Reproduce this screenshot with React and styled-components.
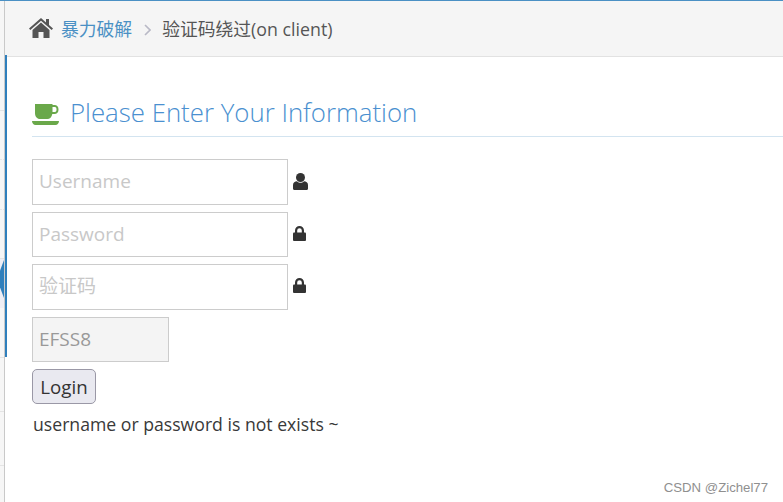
import React from "react";
import styled, { createGlobalStyle } from "styled-components";

const Global = createGlobalStyle`
  html, body { margin: 0; padding: 0; background: #fff; }
  body { width: 783px; height: 502px; overflow: hidden; font-family: "Open Sans", "Noto Sans CJK SC", sans-serif; }
  * { box-sizing: border-box; }
`;

const Page = styled.div`
  width: 783px;
  height: 502px;
  display: flex;
  position: relative;
  overflow: hidden;
  background: #fff;
  border-top: 1px solid #4a90c4;
`;

const Rail = styled.aside`
  width: 5px;
  flex: none;
  background: #f6f6f6;
  border-right: 1px solid #c9c9c9;
  display: flex;
  flex-direction: column;
`;

const RailItem = styled.div`
  height: ${p => p.$h}px;
  flex: none;
  border-bottom: 1px ${p => (p.$faint ? "dotted #e6e6e6" : "solid #e4e4e4")};
`;

const RailActive = styled.div`
  height: 49px;
  flex: none;
  background: #eeeef5;
  display: flex;
  align-items: center;
  &::after {
    content: "";
    width: 4px;
    height: 38px;
    margin-top: -9px;
    background: #2f7fbc;
    clip-path: polygon(100% 0, 100% 100%, 0 72%, 0 28%);
  }
`;

const Main = styled.main`
  flex: 1;
  display: flex;
  flex-direction: column;
  min-width: 0;
  position: relative;
`;

const Breadcrumbs = styled.nav`
  height: 56px;
  flex: none;
  background: #f5f5f5;
  border-bottom: 1px solid #e2e2e2;
  display: flex;
  align-items: center;
  padding: 0 0 2px 24px;
  font-size: 17.8px;
  color: #555;
`;

const HomeIcon = styled.svg`
  width: 24px;
  height: 20px;
  color: #555;
  margin: 1px 8px 0 0;
`;

const CrumbLink = styled.span`
  color: #4a90c4;
`;

const Chevron = styled.svg`
  width: 7px;
  height: 12px;
  margin: 4px 11px 0 12px;
`;

const ActiveBar = styled.div`
  position: absolute;
  left: 0;
  top: 54px;
  width: 2px;
  height: 302px;
  background: #2f7fbc;
`;

const Content = styled.section`
  flex: 1;
  padding: 41px 0 0 27px;
`;

const Title = styled.h2`
  margin: 0 0 22px;
  height: 39px;
  display: flex;
  align-items: center;
  gap: 11px;
  font-size: 25.8px;
  font-weight: 300;
  color: #4a90d0;
  border-bottom: 1px solid #d3e4f0;
  padding-bottom: 10px;
`;

const CupIcon = styled.svg`
  width: 27px;
  height: 21px;
  flex: none;
  margin-top: 5px;
`;

const FormArea = styled.div`
  display: flex;
  flex-direction: column;
  align-items: flex-start;
`;

const Row = styled.div`
  display: flex;
  align-items: center;
  gap: 5px;
  margin-bottom: 7px;
`;

const Field = styled.input`
  width: ${p => p.$w ?? 256}px;
  height: ${p => p.$h ?? 46}px;
  border: 1px solid #ccc;
  background: ${p => (p.readOnly ? "#f4f4f4" : "#fff")};
  padding: 0 6px 2px;
  font-size: 19px;
  font-family: "Open Sans", "Noto Sans CJK SC", sans-serif;
  color: #999;
  outline: none;
  &::placeholder { color: #c8c8c8; opacity: 1; }
`;

const LoginButton = styled.button`
  width: 64px;
  height: 35px;
  padding: 0;
  border: 1px solid #9a98a6;
  border-radius: 5px;
  background: #e9e9f0;
  color: #333;
  font-size: 18.7px;
  font-family: "Open Sans", sans-serif;
`;

const Message = styled.p`
  margin: 8px 0 0 1px;
  font-size: 17.65px;
  line-height: 24px;
  color: #393939;
  white-space: nowrap;
`;

const Watermark = styled.span`
  position: absolute;
  right: 15px;
  bottom: 7px;
  font-family: "Liberation Sans", sans-serif;
  font-size: 13.2px;
  color: #8f8f8f;
`;

const GlyphIcon = styled.svg`
  width: ${p => p.$w}px;
  height: ${p => p.$h}px;
  color: #333;
  margin-top: ${p => p.$up ?? 0}px;
`;

const UserGlyph = () => (
  <GlyphIcon $w={15} $h={17} $up={-1} viewBox="0 0 15 17">
    <circle cx="7.500" cy="4.500" r="4.500" fill="currentColor" />
    <path d="M0 15.500v-3.500C0 9.500 2 8.300 4 8.300c1 1 2.300 1.500 3.500 1.500s2.500-.5 3.500-1.500c2 0 4 1.200 4 3.700v3.500c0 .8-.5 1.500-1.500 1.500h-12C.5 17 0 16.300 0 15.500z" fill="currentColor" />
  </GlyphIcon>
);

const LockGlyph = ({ up = -2 }) => (
  <GlyphIcon $w={13} $h={15} $up={up} viewBox="0 0 13 15">
    <path d="M2 7V4.500a4.500 4.500 0 0 1 9 0V7H8.800V4.500a2.300 2.300 0 0 0-4.600 0V7z" fill="currentColor" />
    <rect x="0" y="6.500" width="13" height="8.500" rx="1" fill="currentColor" />
  </GlyphIcon>
);

export default function App() {
  return (
    <Page>
      <Global />
      <Rail>
        <RailItem $h={110} />
        <RailItem $h={49} $faint />
        <RailItem $h={50} $faint />
        <RailItem $h={49} />
        <RailActive />
        <RailItem $h={50} />
        <RailItem $h={54} />
        <RailItem $h={54} />
      </Rail>
      <Main>
        <Breadcrumbs>
          <HomeIcon viewBox="0 0 24 20">
            <path d="M12 0 0 10.500l1.300 1.500L12 2.800 22.700 12l1.300-1.500-4-3.500V1h-3v3.400z" fill="currentColor" />
            <path d="M12 4.600 3.500 12v8h6v-6h5v6h6v-8z" fill="currentColor" />
          </HomeIcon>
          <CrumbLink>暴力破解</CrumbLink>
          <Chevron viewBox="0 0 7 12">
            <path d="M1 1l5 5-5 5" fill="none" stroke="#b9b9c6" strokeWidth="1.600" />
          </Chevron>
          <span>验证码绕过(on client)</span>
        </Breadcrumbs>
        <ActiveBar />
        <Content>
          <Title>
            <CupIcon viewBox="0 0 27 21">
              <path d="M3 0h17.500v1H23c2.500 0 3.500 2.200 3.500 4.500S25.500 10 23 10h-2.700c-.5 3-2.500 5-5 5H8c-3 0-5-2.500-5-6zM20.500 3v5H23c1 0 1.500-1 1.500-2.500S24 3 23 3z" fill="#6aa84a" fillRule="evenodd" />
              <path d="M0 17h27c0 2-1.500 4-3.500 4h-20C1.500 21 0 19 0 17z" fill="#6aa84a" />
            </CupIcon>
            Please Enter Your Information
          </Title>
          <FormArea>
            <Row><Field placeholder="Username" /><UserGlyph /></Row>
            <Row><Field placeholder="Password" $h={45} /><LockGlyph /></Row>
            <Row><Field placeholder="验证码" /><LockGlyph up={-3} /></Row>
            <Row><Field readOnly defaultValue="EFSS8" $w={137} $h={45} /></Row>
            <LoginButton>Login</LoginButton>
            <Message>username or password is not exists ~</Message>
          </FormArea>
        </Content>
      </Main>
      <Watermark>CSDN @Zichel77</Watermark>
    </Page>
  );
}
